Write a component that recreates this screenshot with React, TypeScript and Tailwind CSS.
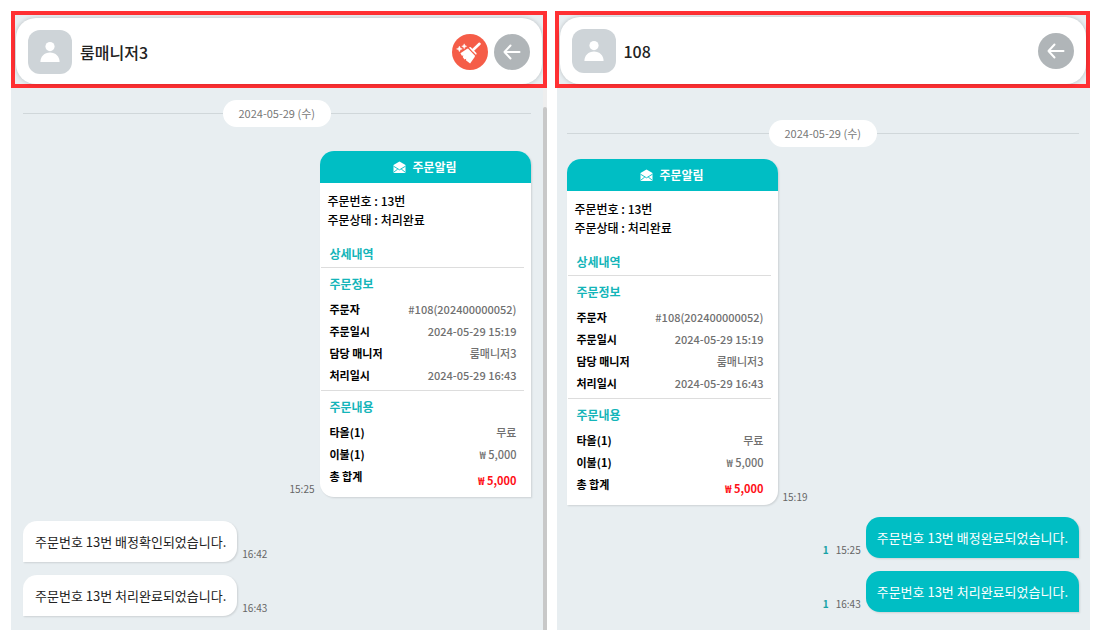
import type { ReactNode } from "react";
import clsx from "clsx";

type Side = "left" | "right";

const orderInfo = [
  { label: "주문자", value: "#108(202400000052)" },
  { label: "주문일시", value: "2024-05-29 15:19" },
  { label: "담당 매니저", value: "룸매니저3" },
  { label: "처리일시", value: "2024-05-29 16:43" },
];

const orderItems = [
  { label: "타올(1)", value: "무료" },
  { label: "이불(1)", value: "₩ 5,000" },
];

function Avatar() {
  return (
    <div className="flex size-11 items-center justify-center rounded-xl bg-[#ced4d8]">
      <svg viewBox="0 0 20 20" className="size-5" fill="#fff" aria-hidden="true">
        <circle cx="10" cy="4.6" r="4.6" />
        <path d="M.4 20c0-5.4 4-9.4 9.6-9.4s9.6 4 9.6 9.4z" />
      </svg>
    </div>
  );
}

function BackButton() {
  return (
    <button
      type="button"
      aria-label="뒤로"
      className="flex size-9 items-center justify-center rounded-full bg-[#b0b5b8]"
    >
      <svg
        viewBox="0 0 36 36"
        className="size-9"
        fill="none"
        stroke="#fff"
        strokeWidth="2"
        strokeLinecap="round"
        strokeLinejoin="round"
        aria-hidden="true"
      >
        <path d="M25.500 18H10.500M16.500 11.500L10.500 18l6 6.500" />
      </svg>
    </button>
  );
}

function CleanButton() {
  return (
    <button
      type="button"
      aria-label="청소"
      className="flex size-9 items-center justify-center rounded-full bg-[#f55d48]"
    >
      <svg viewBox="0 0 36 36" className="size-9" fill="#fff" aria-hidden="true">
        <path d="M27.500 9.800L21 16" stroke="#fff" strokeWidth="2.600" strokeLinecap="round" />
        <path d="M16.800 13.600l1.800-.6 6 6.200-.5 1.700z" />
        <path d="M14.800 14.900l1.200-.3 7 7.200-.3 1.200-4.600 6.500-4.200-3.200.3-1.500-1.700.7-1.800-2.500.7-1.600-1.500.3-1.500-2.500z" />
        <path d="M7.400 12l.9 2 2 .9-2 .9-.9 2-.9-2-2-.9 2-.9z" stroke="#fff" strokeWidth=".4" />
        <path d="M12.200 9.800l.8 1.700 1.700.8-1.700.8-.8 1.700-.8-1.700-1.700-.8 1.700-.8z" stroke="#fff" strokeWidth=".4" />
      </svg>
    </button>
  );
}

function MailIcon() {
  return (
    <svg viewBox="0 0 13 13" className="size-[13px]" aria-hidden="true">
      <path d="M6.500.6L12.500 4v7.200q0 .8-.8.800H1.300q-.8 0-.8-.8V4z" fill="#fff" />
      <path
        d="M.5 5.200l6 3.600 6-3.600M.8 11.200l4-3.200M12.200 11.200l-4-3.200"
        fill="none"
        stroke="#00bec4"
        strokeWidth=".9"
      />
    </svg>
  );
}

function DateDivider({ children }: { children: ReactNode }) {
  return (
    <div className="flex items-center">
      <div className="h-px flex-1 bg-[#d0d7da]" />
      <time className="rounded-full bg-white px-4 py-1 text-[11px] leading-[19px] text-[#777]">
        {children}
      </time>
      <div className="h-px flex-1 bg-[#d0d7da]" />
    </div>
  );
}

function Row({ label, value }: { label: string; value: string }) {
  return (
    <div className="flex justify-between leading-[22px]">
      <dt className="font-bold text-black">{label}</dt>
      <dd className="font-medium text-[#707070]">{value}</dd>
    </div>
  );
}

function SectionTitle({ children }: { children: ReactNode }) {
  return (
    <h3 className="pt-[7px] pb-[5px] text-xs leading-[18px] font-bold text-[#14b5b9]">
      {children}
    </h3>
  );
}

function OrderCard({ className }: { className: string }) {
  return (
    <article
      className={clsx(
        "w-[211px] overflow-hidden rounded-t-[14px] bg-white text-xs shadow-[1px_1px_2px_rgba(0,0,0,0.12)]",
        className,
      )}
    >
      <h2 className="flex h-8 items-center justify-center gap-1.5 bg-[#00bec4] font-bold text-white">
        <MailIcon />
        주문알림
      </h2>
      <div className="px-2 pt-2 leading-[19px] font-medium text-black">
        <p>주문번호 : 13번</p>
        <p>주문상태 : 처리완료</p>
      </div>
      <div className="mr-[7px] ml-px pb-1.5 text-[11px]">
        <h3 className="border-b border-[#ddd] px-2 pt-4 pb-1 pl-[9px] text-xs leading-[18px] font-bold text-[#14b5b9]">
          상세내역
        </h3>
        <section className="border-b border-[#ddd] pr-[7px] pb-1 pl-[9px]">
          <SectionTitle>주문정보</SectionTitle>
          <dl>
            {orderInfo.map((row) => (
              <Row key={row.label} {...row} />
            ))}
          </dl>
        </section>
        <section className="pr-[7px] pl-[9px]">
          <SectionTitle>주문내용</SectionTitle>
          <dl>
            {orderItems.map((row) => (
              <Row key={row.label} {...row} />
            ))}
            <div className="flex justify-between leading-[22px] font-bold">
              <dt className="text-black">총 합계</dt>
              <dd className="pt-1 text-[#ff1018]">₩ 5,000</dd>
            </div>
          </dl>
        </section>
      </div>
    </article>
  );
}

function Time({ children }: { children: ReactNode }) {
  return <time className="text-[10px] leading-4 text-[#666]">{children}</time>;
}

type MessageProps = { side: Side; time: string; text: string };

function Message({ side, time, text }: MessageProps) {
  if (side === "left") {
    return (
      <div className="flex items-end gap-[5px]">
        <p className="rounded-[14px] rounded-bl-none bg-white pt-[11px] pr-[11px] pb-2.5 pl-3 text-[13px] leading-5 text-[#222] shadow-[1px_1px_2px_rgba(0,0,0,0.12)]">
          {text}
        </p>
        <Time>{time}</Time>
      </div>
    );
  }
  return (
    <div className="flex items-end justify-end gap-[5px]">
      <span className="pr-0.5 text-[10px] leading-4 font-bold text-[#17a2a6]">1</span>
      <Time>{time}</Time>
      <p className="rounded-[14px] rounded-br-none bg-[#00bec4] px-[11px] pt-[11px] pb-2.5 text-[13px] leading-5 text-white shadow-[1px_1px_2px_rgba(0,0,0,0.12)]">
        {text}
      </p>
    </div>
  );
}

export default function App() {
  return (
    <main className="grid grid-cols-2 gap-2 bg-white px-[11px] pt-[11px] pb-2.5 [font-family:'Noto_Sans_CJK_KR','Noto_Sans',sans-serif]">
      <section className="flex flex-col">
        <div className="border-4 border-[#ff3033] bg-[#e8eef1] pt-[3px] pr-px pl-px">
          <header className="flex items-center gap-2 rounded-[20px] bg-white px-3 pt-3 pb-2.5 shadow-[0_0_4px_rgba(0,0,0,0.2)]">
            <Avatar />
            <h1 className="flex-1 text-base font-medium text-[#222]">룸매니저3</h1>
            <div className="flex gap-1.5">
              <CleanButton />
              <BackButton />
            </div>
          </header>
        </div>
        <div className="flex flex-1 bg-[#e8eef1]">
          <div className="flex-1 pt-3 pr-3 pb-3.5 pl-3">
            <DateDivider>2024-05-29 (수)</DateDivider>
            <div className="mt-6 flex items-end justify-end gap-[5px]">
              <Time>15:25</Time>
              <OrderCard className="rounded-bl-[14px]" />
            </div>
            <div className="mt-6 flex flex-col gap-[13px]">
              <Message side="left" time="16:42" text="주문번호 13번 배정확인되었습니다." />
              <Message side="left" time="16:43" text="주문번호 13번 처리완료되었습니다." />
            </div>
          </div>
          <div className="w-1 bg-[#eee] pt-[19px]">
            <div className="h-full rounded-t-sm bg-[#c8c8c8]" />
          </div>
        </div>
      </section>

      <section className="flex flex-col">
        <div className="border-4 border-[#ff3033] bg-[#e8eef1] pt-0.5 pl-px">
          <header className="flex items-center gap-2 rounded-[20px] bg-white px-3 pt-3 pb-[11px] shadow-[0_0_4px_rgba(0,0,0,0.2)]">
            <Avatar />
            <h1 className="flex-1 text-base font-medium text-[#222]">108</h1>
            <BackButton />
          </header>
        </div>
        <div className="ml-0.5 flex-1 bg-[#e8eef1] pt-8 pr-[11px] pb-[18px] pl-2.5">
          <DateDivider>2024-05-29 (수)</DateDivider>
          <div className="mt-3 flex items-end gap-[5px]">
            <OrderCard className="rounded-br-[14px]" />
            <Time>15:19</Time>
          </div>
          <div className="mt-3 flex flex-col gap-[13px]">
            <Message side="right" time="15:25" text="주문번호 13번 배정완료되었습니다." />
            <Message side="right" time="16:43" text="주문번호 13번 처리완료되었습니다." />
          </div>
        </div>
      </section>
    </main>
  );
}
